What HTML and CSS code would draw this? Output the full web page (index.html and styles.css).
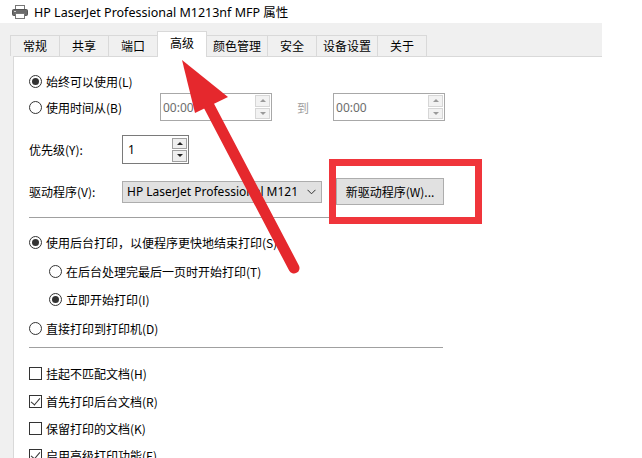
FILE: index.html
```html
<!DOCTYPE html>
<html lang="zh-CN">

<head>
  <meta charset="UTF-8">
  <meta name="viewport" content="width=device-width, initial-scale=1.0">
  <title>HP LaserJet Professional M1213nf MFP 属性</title>
  <link rel="stylesheet" href="styles.css">
</head>

<body>
  <div class="titlebar">
    <svg class="printer-icon" width="16" height="14" viewBox="0 0 16 14">
      <rect x="3.5" y="0.5" width="9" height="5" fill="#fff" stroke="#777" />
      <rect x="0.5" y="4.5" width="15" height="6" rx="1" fill="#6b6b6b" stroke="#555" />
      <rect x="3.5" y="8.5" width="9" height="5" fill="#fff" stroke="#777" />
      <rect x="2" y="6" width="2" height="1" fill="#cfcfcf" />
    </svg>
    <span>HP LaserJet Professional M1213nf MFP 属性</span>
  </div>

  <div class="window">
    <div class="tabs">
      <div class="tab">常规</div>
      <div class="tab">共享</div>
      <div class="tab">端口</div>
      <div class="tab active">高级</div>
      <div class="tab">颜色管理</div>
      <div class="tab">安全</div>
      <div class="tab">设备设置</div>
      <div class="tab">关于</div>
    </div>

    <div class="panel">
      <!-- availability -->
      <div class="option first"><span class="radio checked"></span>始终可以使用(L)</div>
      <div class="row time-row">
        <div class="option inline"><span class="radio"></span>使用时间从(B)</div>
        <div class="time-box">
          <span>00:00</span>
          <div class="spin">
            <span class="up"></span>
            <span class="down"></span>
          </div>
        </div>
        <span class="to">到</span>
        <div class="time-box">
          <span>00:00</span>
          <div class="spin">
            <span class="up"></span>
            <span class="down"></span>
          </div>
        </div>
      </div>

      <div class="row priority-row">
        <span class="field-label">优先级(Y):</span>
        <div class="number-box">
          <span>1</span>
          <div class="spin dark">
            <span class="up"></span>
            <span class="down"></span>
          </div>
        </div>
      </div>

      <div class="row driver-row">
        <span class="field-label">驱动程序(V):</span>
        <div class="combo">
          <span>HP LaserJet Professional M121</span>
          <svg width="9" height="6" viewBox="0 0 9 6">
            <polyline points="0.5,0.8 4.5,4.8 8.5,0.8" fill="none" stroke="#333" stroke-width="1" />
          </svg>
        </div>
        <button class="btn">新驱动程序(W)...</button>
      </div>

      <div class="sep sep-top"></div>

      <!-- spooling -->
      <div class="option spool"><span class="radio checked"></span>使用后台打印，以便程序更快地结束打印(S)</div>
      <div class="option sub gap9"><span class="radio"></span>在后台处理完最后一页时开始打印(T)</div>
      <div class="option sub"><span class="radio checked"></span>立即开始打印(I)</div>
      <div class="option gap9"><span class="radio"></span>直接打印到打印机(D)</div>

      <div class="sep sep-bottom"></div>

      <!-- checkboxes -->
      <div class="option check-first"><span class="checkbox"></span>挂起不匹配文档(H)</div>
      <div class="option"><span class="checkbox checked"></span>首先打印后台文档(R)</div>
      <div class="option gap7"><span class="checkbox"></span>保留打印的文档(K)</div>
      <div class="option gap7"><span class="checkbox checked"></span>启用高级打印功能(E)</div>
    </div>
  </div>

  <!-- annotations over the screenshot -->
  <div class="highlight"></div>
  <svg class="arrow" width="642" height="458" viewBox="0 0 642 458">
    <line x1="208" y1="104" x2="294" y2="268" stroke="#e5282d" stroke-width="11" stroke-linecap="round" />
    <polygon points="182,60 195,113 228,97" fill="#e5282d" />
  </svg>
</body>

</html>
```

FILE: styles.css
```css
/* General */
body {
  margin: 0;
  background-color: #fff;
  font-family: "Noto Sans CJK SC", "Noto Sans", sans-serif;
  font-size: 12px;
  color: #000;
  overflow: hidden;
}

.titlebar {
  height: 23px;
  display: flex;
  align-items: center;
  padding-left: 12px;
  gap: 6px;
  font-family: "Noto Sans", "Noto Sans CJK SC", sans-serif;
  font-size: 12.5px;
}

.window {
  width: 602px;
  height: 435px;
  background-color: #f0f0f0;
  padding-left: 13px;
  box-sizing: border-box;
  display: flex;
  flex-direction: column;
}

/* Tabs */
.tabs {
  height: 33px;
  flex-shrink: 0;
  display: flex;
  align-items: flex-end;
  margin-left: -2px;
}

.tab {
  height: 20px;
  line-height: 19px;
  min-width: 36px;
  padding: 0 6px;
  text-align: center;
  border: 1px solid #d9d9d9;
  border-bottom: none;
  margin-left: -1px;
  background-color: #f0f0f0;
}

.tab.active {
  height: 25px;
  line-height: 21px;
  background-color: #fff;
  margin-bottom: -1px;
  position: relative;
  z-index: 1;
}

.panel {
  flex: 1;
  min-height: 0;
  overflow: hidden;
  background-color: #fff;
  border-top: 1px solid #d9d9d9;
  border-left: 1px solid #d9d9d9;
  padding-left: 15px;
}

/* Radios and checkboxes */
.option {
  height: 20px;
  display: flex;
  align-items: center;
  margin-top: 8px;
  white-space: nowrap;
}

.option.first {
  margin-top: 14px;
}

.option.inline {
  margin-top: 0;
  width: 131px;
}

.option.spool {
  margin-top: 14px;
}

.option.sub {
  margin-left: 20px;
}

.option.gap9 {
  margin-top: 9px;
}

.option.gap7 {
  margin-top: 7px;
}

.option.check-first {
  margin-top: 15px;
}

.radio {
  width: 13px;
  height: 13px;
  border: 1px solid #333;
  border-radius: 50%;
  box-sizing: border-box;
  margin-right: 4px;
  display: flex;
  justify-content: center;
  align-items: center;
  flex-shrink: 0;
}

.radio.checked::after {
  content: "";
  width: 7px;
  height: 7px;
  border-radius: 50%;
  background-color: #333;
}

.checkbox {
  width: 13px;
  height: 13px;
  border: 1px solid #333;
  box-sizing: border-box;
  margin-right: 4px;
  position: relative;
  flex-shrink: 0;
}

.checkbox.checked::after {
  content: "";
  position: absolute;
  left: 3px;
  top: 0px;
  width: 4px;
  height: 8px;
  border-right: 1px solid #333;
  border-bottom: 1px solid #333;
  transform: rotate(40deg);
}

/* Rows */
.row {
  display: flex;
  align-items: center;
}

.time-row {
  height: 28px;
  margin-top: 2px;
}

.priority-row {
  height: 29px;
  margin-top: 14px;
}

.driver-row {
  height: 27px;
  margin-top: 14px;
}

.field-label {
  width: 93px;
}

/* Spin boxes */
.time-box,
.number-box {
  height: 28px;
  border: 1px solid #a8a8a8;
  box-sizing: border-box;
  display: flex;
  align-items: center;
  justify-content: space-between;
  padding: 0 1px 0 2px;
  font-family: "Noto Sans", sans-serif;
}

.time-box {
  width: 112px;
  color: #6d6d6d;
}

.number-box {
  width: 67px;
  height: 29px;
  border-color: #7a7a7a;
  padding-left: 5px;
}

.to {
  color: #a0a0a0;
  margin: 0 24px 0 25px;
}

.spin {
  width: 15px;
  height: 24px;
  display: flex;
  flex-direction: column;
  gap: 1px;
}

.spin span {
  flex: 1;
  background-color: #f2f2f2;
  border: 1px solid #d6d6d6;
  position: relative;
}

.spin span::after {
  content: "";
  position: absolute;
  left: 4px;
  top: 3px;
  border-left: 3px solid transparent;
  border-right: 3px solid transparent;
}

.spin .up::after {
  border-bottom: 3px solid #9a9a9a;
}

.spin .down::after {
  border-top: 3px solid #9a9a9a;
}

.spin.dark span {
  background-color: #efefef;
  border-color: #a0a0a0;
}

.spin.dark .up::after {
  border-bottom-color: #222;
}

.spin.dark .down::after {
  border-top-color: #222;
}

/* Driver combo and button */
.combo {
  width: 200px;
  height: 22px;
  background-color: #e1e1e1;
  border: 1px solid #adadad;
  box-sizing: border-box;
  display: flex;
  align-items: center;
  justify-content: space-between;
  padding: 0 5px 0 4px;
  font-family: "Noto Sans", sans-serif;
}

.btn {
  margin-left: 14px;
  width: 108px;
  height: 27px;
  background-color: #e1e1e1;
  border: 1px solid #adadad;
  font-family: "Noto Sans CJK SC", "Noto Sans", sans-serif;
  font-size: 12px;
  color: #000;
  padding: 0;
}

.sep {
  width: 414px;
  height: 1px;
  background-color: #a0a0a0;
}

.sep-top {
  margin-top: 12px;
}

.sep-bottom {
  margin-top: 9px;
}

/* Annotations */
.highlight {
  position: absolute;
  left: 329px;
  top: 159px;
  width: 153px;
  height: 65px;
  border: 7px solid #f0353b;
  box-sizing: border-box;
}

.arrow {
  position: absolute;
  left: 0;
  top: 0;
  pointer-events: none;
}
```
